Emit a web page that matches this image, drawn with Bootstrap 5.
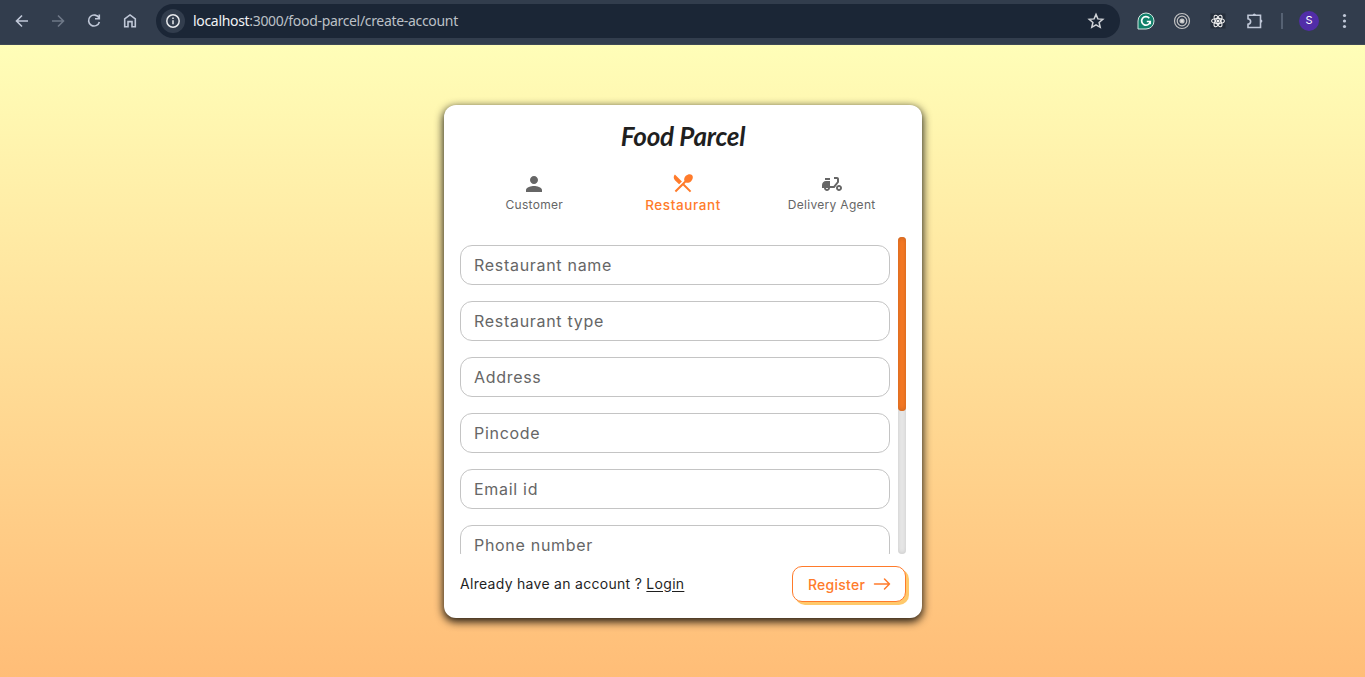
<!DOCTYPE html>
<html lang="en">
<head>
<meta charset="utf-8">
<meta name="viewport" content="width=device-width, initial-scale=1">
<title>Food Parcel</title>
<link href="https://cdn.jsdelivr.net/npm/bootstrap@5.3.0/dist/css/bootstrap.min.css" rel="stylesheet">
<style>
  body { font-family: Inter, "Open Sans", sans-serif; color: #1f1f1f; background: linear-gradient(#fffeb8 45px, #ffbd77); }
  .browser-bar { height: 45px; background: #323d4d; color: #c0c8d8; padding: 0 10px 3px 11px; border-bottom: 1px solid #3f4955; }
  .browser-bar svg { display: block; flex: none; }
  .bar-nav { gap: 14px; }
  .address { height: 34px; margin-left: 15px; background: #1b2636; padding: 0 15px 0 5px; font: 14px/20px "Noto Sans", sans-serif; letter-spacing: -.32px; color: #bcc0c6; }
  .address b { font-weight: 400; color: #f1f3f5; }
  .site-info { width: 24px; height: 24px; background: #323d4d; margin-right: 8px; }
  .bar-tools { width: 235px; padding-left: 17px; }
  .extensions { gap: 18px; }
  .avatar { width: 20px; height: 20px; background: #512da8; color: #fff; font-size: 11px; }
  .page { padding-left: 1px; }
  .signup { width: 478px; height: 513px; margin-top: 60px; padding: 16px; border-radius: 12px; box-shadow: 0 3px 9px 1px rgba(0,0,0,.85); }
  .brand-name { height: 32px; font: italic 700 26px/31px Lato, sans-serif; letter-spacing: -.2px; margin: 0; }
  .role-tabs { height: 84px; margin-top: 18px; color: #666; font-size: 12px; }
  .role-tabs .role { line-height: 17px; letter-spacing: .3px; }
  .role svg { display: block; }
  .role:not(.current) svg { margin-top: 1px; }
  .role.current { color: #ff7b2b; font-size: 13.5px; font-weight: 500; letter-spacing: .6px; }
  .current span { padding-top: 2px; }
  .fields { height: 317px; margin-top: -18px; gap: 8px; }
  .field-list { width: 430px; padding-top: 8px; gap: 16px; overflow: hidden; }
  .signup .form-control { flex: none; height: 40px; border: 1px solid #c4c4c4; border-radius: 12px; padding: 0 13px; font-size: 16px; letter-spacing: .7px; }
  .signup .form-control::placeholder { color: #666; opacity: 1; }
  .track { width: 8px; border-radius: 4px; background: #e9e9e9; box-shadow: inset 0 0 5px #c8c8c8; }
  .thumb { height: 174px; border-radius: 4px; background: #f97a25; box-shadow: inset 0 0 5px #c2611f; }
  .signup-foot { height: 36px; margin-top: 12px; font-size: 14px; letter-spacing: .29px; }
  .signup-foot span { padding-bottom: 2px; }
  .signup-foot a { color: inherit; text-underline-offset: 2px; }
  .register { width: 114px; height: 36px; padding: 0 0 0 1px; border: 1px solid #ff7b2b; border-radius: 10px; background: #fff; color: #ff7b2b; box-shadow: 3px 3px 0 #ffc96b; font-size: 14px; font-weight: 500; letter-spacing: .25px; }
</style>
</head>
<body class="vh-100 overflow-hidden">
<header class="browser-bar d-flex align-items-center">
  <div class="bar-nav d-flex">
    <svg width="22" height="22" viewBox="0 0 22 22" fill="none" stroke="currentColor" stroke-width="1.6"><path d="M17 11H6M11 5.5L5.5 11L11 16.5"/></svg>
    <svg width="22" height="22" viewBox="0 0 22 22" fill="none" stroke="#6e7887" stroke-width="1.6"><path d="M5 11h11M11 5.5L16.5 11L11 16.5"/></svg>
    <svg width="22" height="22" viewBox="0 0 22 22" fill="none" stroke="currentColor" stroke-width="1.6"><path d="M16 8A5.5 5.5 0 1 0 16.4 12M16.3 4.5V8.800H12"/></svg>
    <svg width="22" height="22" viewBox="0 0 22 22" fill="none" stroke="currentColor" stroke-width="1.6"><path d="M5.7 16.7V8.9L11 4.9L16.3 8.9V16.7H13V11.6H9V16.7Z"/></svg>
  </div>
  <div class="address rounded-pill d-flex align-items-center flex-grow-1">
    <span class="site-info rounded-circle d-flex align-items-center justify-content-center"><svg width="16" height="16" fill="none" stroke="#e8eaed" stroke-width="1.5"><circle cx="8" cy="8" r="6.2"/><path d="M8 7.3v4M8 4.5v1.600"/></svg></span>
    <span><b>localhost</b>:3000/food-parcel/create-account</span>
    <svg class="ms-auto" width="18" height="18" viewBox="0 0 18 18" fill="none" stroke="#d0d3d8" stroke-width="1.5"><path d="M9 2.4l1.9 4.5 4.9.4-3.7 3.2 1.1 4.800L9 12.8l-4.2 2.5 1.1-4.800-3.7-3.2 4.9-.4Z"/></svg>
  </div>
  <div class="bar-tools d-flex align-items-center">
    <div class="extensions d-flex align-items-center">
      <svg width="18" height="18" viewBox="0 0 18 18"><path d="M1 17V9a8 8 0 1 1 8 8Z" fill="#11806a" stroke="#d5e6e2"/><path d="M12.300 6.200A4.300 4.300 0 1 0 13.200 9.500H9.800M13.200 9.500v2.700" fill="none" stroke="#fff" stroke-width="1.7"/></svg>
      <svg width="18" height="18" fill="none" stroke="#c3c3c3" stroke-width="1.2"><circle cx="9" cy="9" r="7.5"/><circle cx="9" cy="9" r="4.8"/><circle cx="9" cy="9" r="2" fill="#ddd"/></svg>
      <svg width="18" height="18" fill="none" stroke="#f1f1f1" stroke-width="1.1"><path d="M1.500 1.500h15v15h-15z" fill="#252e3b" stroke="none"/><ellipse cx="9" cy="9" rx="6.400" ry="2.500"/><ellipse cx="9" cy="9" rx="6.400" ry="2.500" transform="rotate(60 9 9)"/><ellipse cx="9" cy="9" rx="6.400" ry="2.500" transform="rotate(120 9 9)"/><circle cx="9" cy="9" r="1" fill="#fff"/></svg>
      <svg width="20" height="20" viewBox="0 0 20 20" fill="none" stroke="currentColor" stroke-width="1.6"><path d="M3 4.300H15.500V16.500H3V13.300C6.500 12.800 6.500 8.200 3 7.700Z"/><path d="M7.700 4a1.600 1.600 0 0 1 3.200 0ZM15.800 8.500a1.600 1.600 0 0 1 0 3.200Z" fill="currentColor" stroke="none"/></svg>
    </div>
    <svg class="ms-3" width="2" height="16"><path d="M1 0v16" stroke="#566273" stroke-width="2"/></svg>
    <span class="avatar ms-3 rounded-circle d-flex align-items-center justify-content-center">S</span>
    <svg class="ms-auto" width="20" height="18" fill="currentColor"><circle cx="9.500" cy="3.500" r="1.600"/><circle cx="9.500" cy="9" r="1.600"/><circle cx="9.500" cy="14.500" r="1.600"/></svg>
  </div>
</header>
<div class="page">
<main class="signup bg-white mx-auto">
  <h1 class="brand-name text-center">Food Parcel</h1>
  <nav class="role-tabs row g-0 text-center">
    <div class="role col d-flex flex-column align-items-center"><svg width="24" height="24" viewBox="0 0 24 24" fill="currentColor"><path d="M12 12c2.210 0 4-1.790 4-4s-1.790-4-4-4-4 1.790-4 4 1.790 4 4 4zm0 2c-2.670 0-8 1.340-8 4v2h16v-2c0-2.660-5.330-4-8-4z"/></svg><span>Customer</span></div>
    <div class="role current col d-flex flex-column align-items-center"><svg width="24" height="24" viewBox="0 0 24 24" fill="currentColor"><path d="M8.100 13.340l2.830-2.830L3.910 3.500c-1.560 1.560-1.560 4.090 0 5.660l4.190 4.180zm6.780-1.810c1.530.71 3.680.21 5.270-1.380 1.910-1.910 2.280-4.650.81-6.120-1.460-1.460-4.200-1.100-6.120.81-1.590 1.590-2.090 3.740-1.380 5.270L3.700 19.870l1.410 1.410L12 14.410l6.880 6.880 1.410-1.410L13.410 13l1.470-1.470z"/></svg><span>Restaurant</span></div>
    <div class="role col d-flex flex-column align-items-center"><svg width="24" height="24" viewBox="0 0 24 24" fill="currentColor"><path d="M19 7c0-1.100-.9-2-2-2h-3v2h3v2.650L13.520 14H10V9H6c-2.210 0-4 1.790-4 4v3h2c0 1.660 1.340 3 3 3s3-1.340 3-3h4.480L19 10.350V7zM7 17c-.55 0-1-.45-1-1h2c0 .55-.45 1-1 1z"/><path d="M5 6h5v2H5z"/><path d="M19 13c-1.660 0-3 1.340-3 3s1.340 3 3 3 3-1.340 3-3-1.340-3-3-3zm0 4c-.55 0-1-.45-1-1s.45-1 1-1 1 .45 1 1-.45 1-1 1z"/></svg><span>Delivery Agent</span></div>
  </nav>
  <div class="fields d-flex">
    <form class="field-list d-flex flex-column">
      <input class="form-control" placeholder="Restaurant name">
      <input class="form-control" placeholder="Restaurant type">
      <input class="form-control" placeholder="Address">
      <input class="form-control" placeholder="Pincode">
      <input class="form-control" placeholder="Email id">
      <input class="form-control" placeholder="Phone number">
    </form>
    <div class="track"><div class="thumb"></div></div>
  </div>
  <div class="signup-foot d-flex align-items-center justify-content-between">
    <span>Already have an account ? <a href="#">Login</a></span>
    <button class="register btn d-flex align-items-center justify-content-center gap-2">Register <svg width="18" height="14" fill="none" stroke="currentColor" stroke-width="1.5" stroke-linecap="round" stroke-linejoin="round"><path d="M1.500 7h15M11.500 2l5 5-5 5"/></svg></button>
  </div>
</main>
</div>
<script src="https://cdn.jsdelivr.net/npm/bootstrap@5.3.0/dist/js/bootstrap.bundle.min.js"></script>
</body>
</html>
